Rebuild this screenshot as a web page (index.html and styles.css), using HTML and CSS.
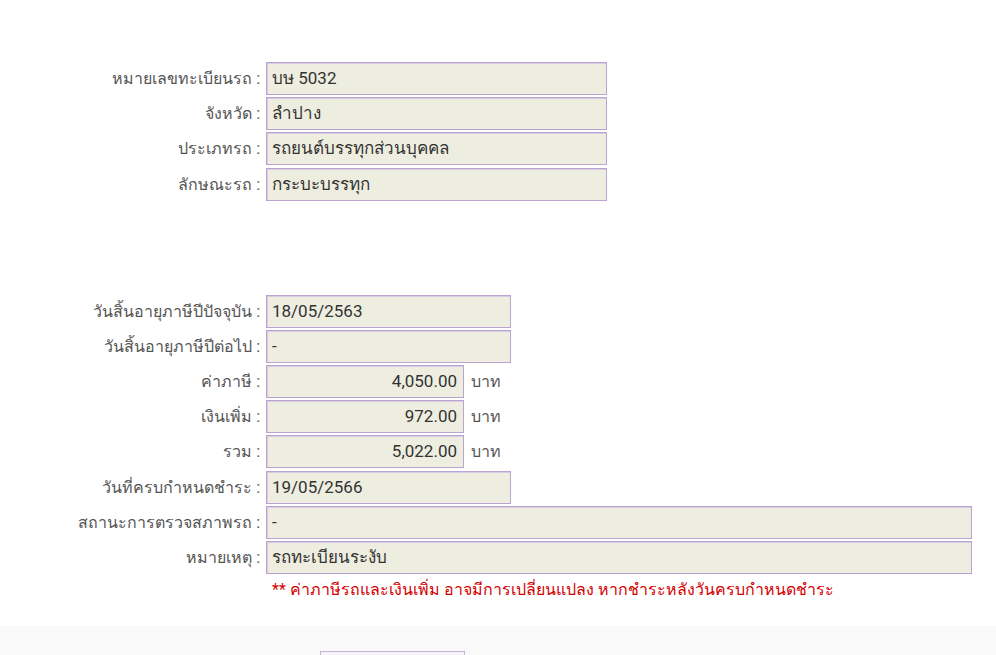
FILE: index.html
```html
<!DOCTYPE html>
<html lang="th">
<head>
  <meta charset="UTF-8">
  <title>ข้อมูลภาษีรถ</title>
  <link rel="stylesheet" href="styles.css">
</head>
<body>
  <div class="content">
    <div class="form-group">
      <div class="row">
        <label>หมายเลขทะเบียนรถ :</label>
        <div class="field w-md">บษ 5032</div>
      </div>
      <div class="row">
        <label>จังหวัด :</label>
        <div class="field w-md">ลำปาง</div>
      </div>
      <div class="row">
        <label>ประเภทรถ :</label>
        <div class="field w-md">รถยนต์บรรทุกส่วนบุคคล</div>
      </div>
      <div class="row">
        <label>ลักษณะรถ :</label>
        <div class="field w-md">กระบะบรรทุก</div>
      </div>
    </div>

    <div class="form-group second">
      <div class="row">
        <label>วันสิ้นอายุภาษีปีปัจจุบัน :</label>
        <div class="field w-sm">18/05/2563</div>
      </div>
      <div class="row">
        <label>วันสิ้นอายุภาษีปีต่อไป :</label>
        <div class="field w-sm">-</div>
      </div>
      <div class="row">
        <label>ค่าภาษี :</label>
        <div class="field w-amount num">4,050.00</div>
        <span class="unit">บาท</span>
      </div>
      <div class="row">
        <label>เงินเพิ่ม :</label>
        <div class="field w-amount num">972.00</div>
        <span class="unit">บาท</span>
      </div>
      <div class="row">
        <label>รวม :</label>
        <div class="field w-amount num">5,022.00</div>
        <span class="unit">บาท</span>
      </div>
      <div class="row">
        <label>วันที่ครบกำหนดชำระ :</label>
        <div class="field w-sm">19/05/2566</div>
      </div>
      <div class="row">
        <label>สถานะการตรวจสภาพรถ :</label>
        <div class="field w-lg">-</div>
      </div>
      <div class="row">
        <label>หมายเหตุ :</label>
        <div class="field w-lg">รถทะเบียนระงับ</div>
      </div>
      <div class="row">
        <span class="spacer"></span>
        <p class="note">** ค่าภาษีรถและเงินเพิ่ม อาจมีการเปลี่ยนแปลง หากชำระหลังวันครบกำหนดชำระ</p>
      </div>
    </div>
  </div>

  <div class="footer">
    <div class="footer-box"></div>
  </div>
</body>
</html>
```

FILE: styles.css
```css
body {
  margin: 0;
  font-family: Roboto, "Noto Sans", "DejaVu Sans", sans-serif;
  font-size: 16px;
  color: #333;
  background: #fff;
}
.content {
  padding-top: 62px;
  padding-bottom: 24px;
}
.form-group {
  display: flex;
  flex-direction: column;
  gap: 2.2px;
}
.form-group.second {
  margin-top: 94px;
}
.row {
  display: flex;
  align-items: center;
}
.row label,
.spacer {
  width: 266px;
  flex-shrink: 0;
  text-align: right;
  color: #555;
  padding-right: 6px;
  box-sizing: border-box;
  white-space: nowrap;
}
.field {
  box-sizing: border-box;
  height: 33px;
  line-height: 31px;
  padding: 0 6px 0 5px;
  background: #eeeee0;
  border: 1px solid #b9a3cf;
  box-shadow: inset 1px 1px 0 #d8cce4;
  color: #333;
  font-size: 17px;
  white-space: nowrap;
}
.w-md { width: 341px; }
.w-sm { width: 245px; }
.w-amount { width: 198px; }
.w-lg { width: 706px; }
.num {
  text-align: right;
}
.unit {
  margin-left: 7px;
  color: #555;
}
.note {
  margin: 1px 0 0 6px;
  color: #d40000;
  font-size: 16px;
}
.footer {
  background: #f9f9f9;
  height: 40px;
  padding-top: 25px;
  padding-left: 320px;
  box-sizing: border-box;
}
.footer-box {
  width: 145px;
  height: 10px;
  border: 1px solid #c5b3dc;
  border-bottom: none;
  background: #f5f3f7;
  box-sizing: border-box;
}
```
